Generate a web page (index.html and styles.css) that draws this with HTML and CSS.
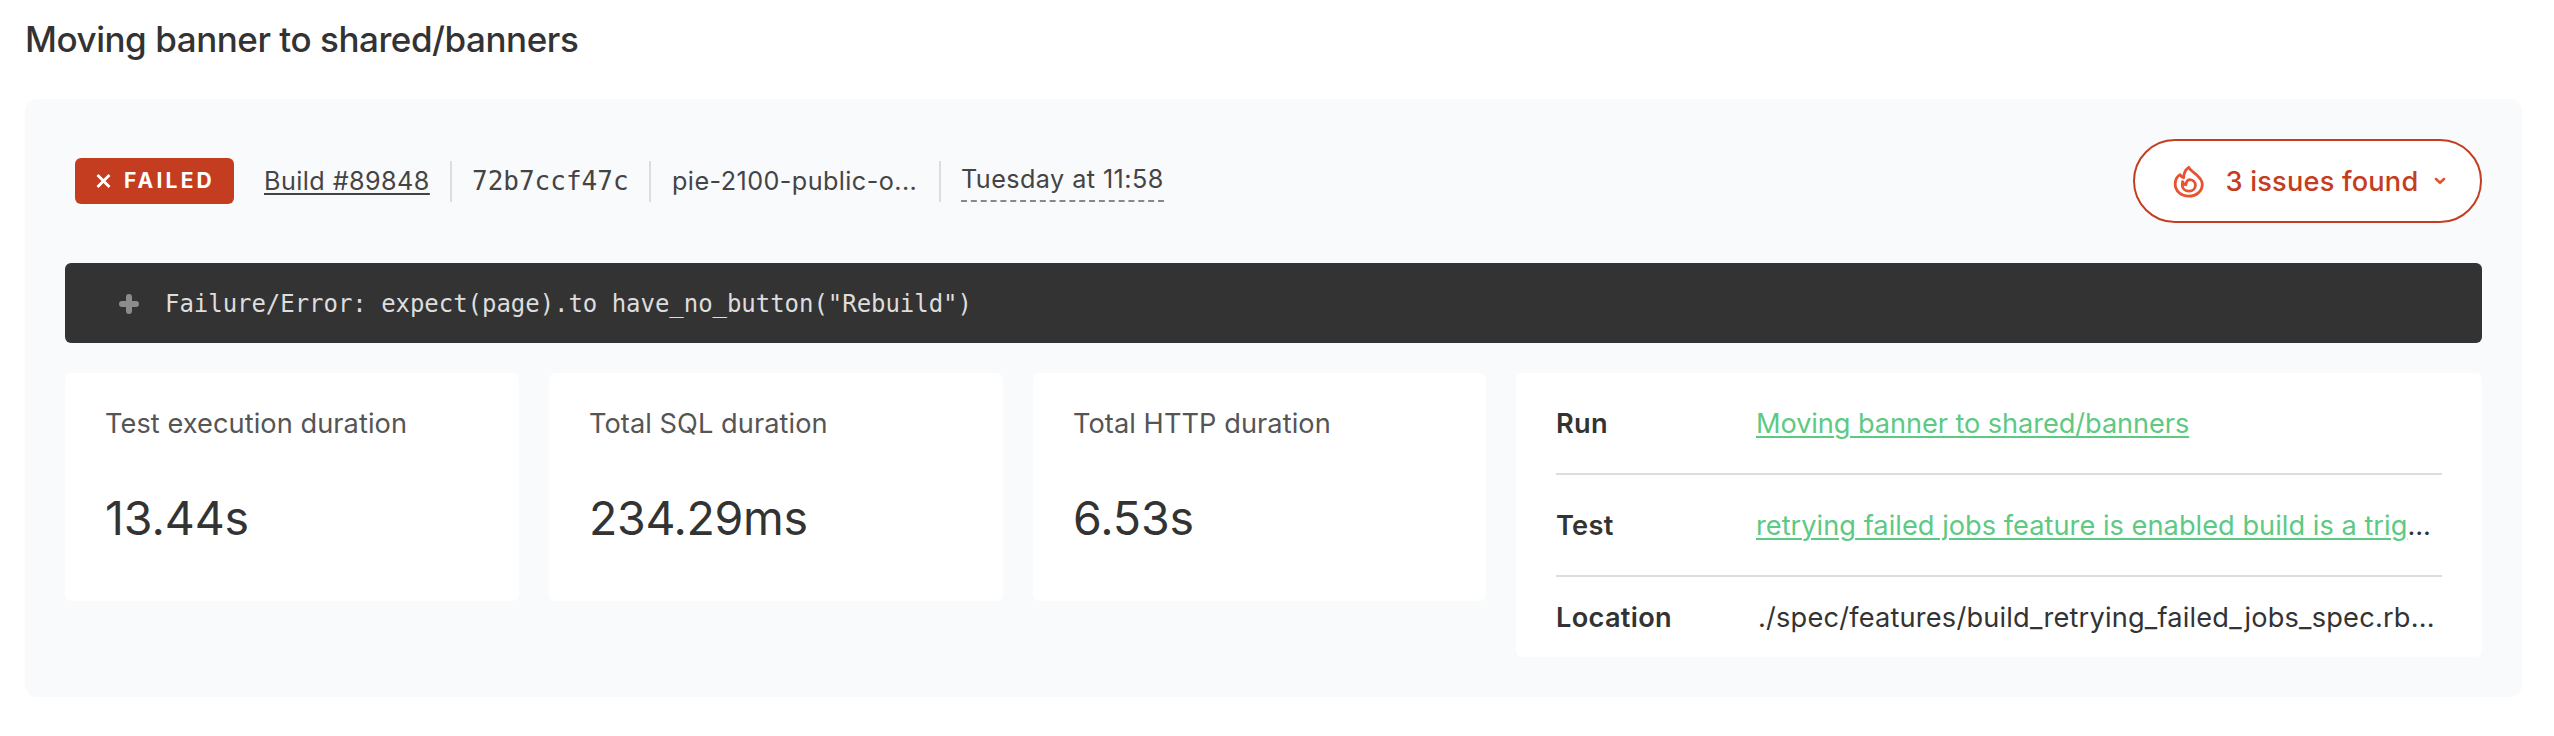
FILE: index.html
```html
<!DOCTYPE html>
<html lang="en">
<head>
<meta charset="utf-8">
<title>Moving banner to shared/banners</title>
<link rel="stylesheet" href="styles.css">
</head>
<body>
<h1 class="title">Moving banner to shared/banners</h1>
<main class="panel">
  <header class="summary">
    <span class="badge">
      <svg class="badge-icon" viewBox="0 0 16 16"><path d="M2 2 14 14M14 2 2 14"/></svg>
      <span class="badge-text">FAILED</span>
    </span>
    <div class="build"><a class="build-link" href="#">Build #89848</a></div>
    <div class="segment segment-commit">72b7ccf47c</div>
    <div class="segment segment-branch">pie-2100-public-o...</div>
    <div class="segment"><time class="time">Tuesday at 11:58</time></div>
    <button class="issues" type="button">
      <svg class="flame" viewBox="8 8 32 34">
        <path d="M23.8 11.3C25 14.5 29 16.4 32 19.2C35 22 37.3 24.8 37.3 28.2C37.3 35.2 31.2 40.2 23.7 40.2C16.2 40.2 10.2 35.2 10.2 28C10.2 24.2 12.2 20.4 15 18.6C15.7 20 17 21.2 18.7 21.7C18.6 17.6 20.8 13.4 23.8 11.3Z"/>
        <path d="M17.6 25.6C18 27.2 19.2 28.6 20.8 28.8C21.2 26.2 22.4 23.8 24.8 23.6C28.2 23.8 30.4 26.4 30.4 29.3C30.4 32.8 27.6 35.2 24 35.2C20.2 35.2 17.3 32.8 17.3 29.2Z"/>
      </svg>
      <span class="issues-text">3 issues found</span>
      <svg class="chevron" viewBox="0 0 12 8"><path d="M2 2 6 5.7 10 2"/></svg>
    </button>
  </header>
  <div class="error">
    <svg class="plus" viewBox="0 0 20 20"><path d="M10 3V17M3 10H17"/></svg>
    <code class="error-text">Failure/Error: expect(page).to have_no_button("Rebuild")</code>
  </div>
  <div class="cards">
    <section class="card">
      <div class="label">Test execution duration</div>
      <div class="value">13.44s</div>
    </section>
    <section class="card">
      <div class="label">Total SQL duration</div>
      <div class="value value-tight">234.29ms</div>
    </section>
    <section class="card">
      <div class="label">Total HTTP duration</div>
      <div class="value">6.53s</div>
    </section>
    <dl class="details">
      <div class="row"><dt class="key">Run</dt><dd class="data data-run"><a class="link" href="#">Moving banner to shared/banners</a></dd></div>
      <div class="row"><dt class="key">Test</dt><dd class="data"><a class="link" href="#">retrying failed jobs feature is enabled build is a trig</a>...</dd></div>
      <div class="row row-last"><dt class="key">Location</dt><dd class="data data-path">./spec/features/build_retrying_failed_jobs_spec.rb...</dd></div>
    </dl>
  </div>
</main>
</body>
</html>
```
FILE: styles.css
```css
* { box-sizing: border-box; }

body {
  margin: 0;
  background: #fff;
  color: #333;
  font-family: Inter, "Liberation Sans", sans-serif;
}

.title {
  margin: 0 0 21px;
  padding-left: 25px;
  font-size: 35px;
  font-weight: 500;
  line-height: 78px;
  letter-spacing: -0.46px;
}

.panel {
  margin: 0 32px 0 25px;
  padding: 40px 40px 40px;
  border-radius: 12px;
  background: #f9fafc;
}

.summary {
  display: flex;
  align-items: center;
  height: 84px;
  padding-left: 10px;
  color: #444;
  font-size: 25.2px;
  line-height: 40px;
  letter-spacing: 0.43px;
  white-space: nowrap;
}

.badge {
  display: flex;
  align-items: center;
  gap: 12px;
  width: 159px;
  height: 46px;
  padding-left: 20px;
  border-radius: 6px;
  background: #c53d20;
  color: #fff;
}

.badge-icon {
  width: 17px;
  height: 16px;
  fill: none;
  stroke: #fff;
  stroke-width: 2.8;
}

.badge-text {
  font-size: 21px;
  font-weight: 700;
  letter-spacing: 3.2px;
}

.build { width: 186px; margin-left: 30px; }

.build-link {
  color: #444;
  text-decoration: underline 2px;
  text-underline-offset: 3px;
}

.segment {
  display: flex;
  height: 41px;
  padding-left: 20px;
  border-left: 2px solid #ddd;
}

.segment-commit {
  width: 199px;
  font-family: "DejaVu Sans Mono", monospace;
  font-size: 26px;
  letter-spacing: 0;
}

.segment-branch {
  width: 290px;
  padding-left: 21px;
}

.time {
  height: 41px;
  padding-bottom: 3px;
  border-bottom: 2px dashed #888;
  line-height: 36px;
}

.issues {
  display: flex;
  align-items: center;
  width: 349px;
  height: 84px;
  margin-left: auto;
  padding: 0 0 0 38px;
  border: 2px solid #c53d20;
  border-radius: 42px;
  background: #fff;
  color: #c53d20;
  font: 500 27.2px/40px Inter, sans-serif;
}

.flame {
  width: 32px;
  height: 34px;
  fill: none;
  stroke: #e75231;
  stroke-width: 2.8;
  stroke-linejoin: round;
}

.issues-text {
  width: 194px;
  margin-left: 20px;
  padding-top: 2px;
  letter-spacing: 0.19px;
}

.chevron {
  width: 12px;
  height: 8px;
  margin-left: 15px;
  fill: none;
  stroke: #e75231;
  stroke-width: 2.6;
  stroke-linecap: round;
  stroke-linejoin: round;
}

.error {
  display: flex;
  align-items: center;
  gap: 26px;
  height: 80px;
  margin: 40px 0 30px;
  padding-top: 2px;
  padding-left: 54px;
  border-radius: 6px;
  background: #333;
  color: #ddd;
}

.plus {
  width: 20px;
  height: 20px;
  fill: none;
  stroke: #8c8c8c;
  stroke-width: 6;
  stroke-linecap: round;
}

.error-text {
  font: 24px/40px "DejaVu Sans Mono", monospace;
  letter-spacing: -0.04px;
  white-space: pre;
}

.cards {
  display: grid;
  grid-template-columns: 454px 454px 453px 1fr;
  gap: 30px;
  align-items: start;
}

.card,
.details {
  border-radius: 6px;
  background: #fff;
}

.card {
  height: 228px;
  padding: 33px 40px 0;
}

.label {
  color: #555;
  font-size: 27.2px;
  line-height: 36px;
  letter-spacing: 0.06px;
}

.value {
  margin-top: 46px;
  font-size: 46.5px;
  line-height: 60px;
  letter-spacing: -0.1px;
}

.value-tight { letter-spacing: -0.35px; }

.details {
  margin: 0;
  padding: 0 40px;
  font-size: 27.2px;
}

.row {
  display: flex;
  align-items: center;
  height: 102px;
  border-bottom: 2px solid #ddd;
  white-space: nowrap;
}

.row-last {
  height: 80px;
  border-bottom: 0;
}

.key {
  width: 200px;
  font-weight: 600;
  letter-spacing: 0.3px;
}

.data {
  margin: 0;
  letter-spacing: 0.03px;
}

.data-run { letter-spacing: -0.08px; }

.data-path {
  padding-left: 2px;
  letter-spacing: 0.2px;
}

.link {
  color: #5dc983;
  text-decoration: underline 2px;
  text-underline-offset: 3px;
}
```
